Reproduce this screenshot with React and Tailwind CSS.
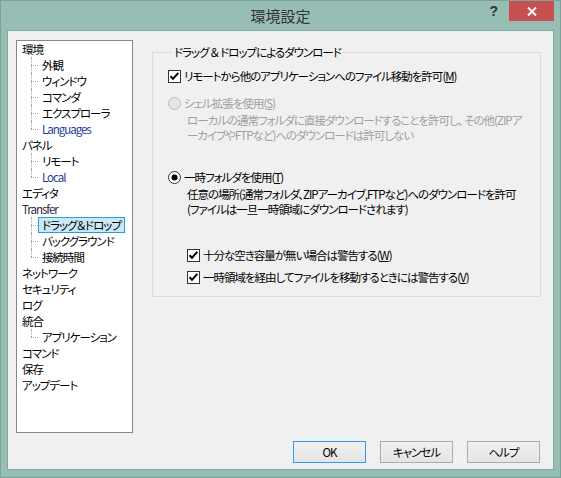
import React from "react";

const TREE = [
  { text: "環境" },
  { text: "外観", child: true },
  { text: "ウィンドウ", child: true },
  { text: "コマンダ", child: true },
  { text: "エクスプローラ", child: true },
  { text: "Languages", child: true, last: true, color: "text-[#1e3c96]" },
  { text: "パネル" },
  { text: "リモート", child: true },
  { text: "Local", child: true, last: true, color: "text-[#1e3c96]" },
  { text: "エディタ" },
  { text: "Transfer", color: "text-[#2b2a3f]" },
  { text: "ドラッグ＆ドロップ", child: true, selected: true },
  { text: "バックグラウンド", child: true },
  { text: "接続時間", child: true, last: true },
  { text: "ネットワーク" },
  { text: "セキュリティ" },
  { text: "ログ" },
  { text: "統合" },
  { text: "アプリケーション", child: true, last: true },
  { text: "コマンド" },
  { text: "保存" },
  { text: "アップデート" },
];

function TreeRow({ item }) {
  const label = (
    <span
      className={
        "h-[16px] flex items-center px-[3px] border whitespace-nowrap leading-[14px] " +
        (item.selected ? "bg-[#cbe8f6] border-[#26a0da]" : "border-transparent") +
        " " +
        (item.color || "text-black")
      }
    >
      {item.text}
    </span>
  );
  if (!item.child) {
    return <div className="h-[16px] flex pl-[1px]">{label}</div>;
  }
  return (
    <div className="h-[16px] flex pl-[14px]">
      <div className="w-[7px] flex flex-col">
        <div className="h-[8px] border-l border-dotted border-[#a0a0a0]" />
        <div
          className={
            "h-[8px] border-t border-dotted border-[#a0a0a0] " +
            (item.last ? "" : "border-l")
          }
        />
      </div>
      {label}
    </div>
  );
}

function CheckBox() {
  return (
    <svg width="13" height="13" viewBox="0 0 13 13" className="shrink-0">
      <rect x="0.5" y="0.5" width="12" height="12" fill="#fff" stroke="#333" />
      <path d="M2.5 6.2 L5 8.8 L10.3 2.8" fill="none" stroke="#000" strokeWidth="2" />
    </svg>
  );
}

function Radio({ checked, disabled }) {
  return (
    <svg width="13" height="13" viewBox="0 0 13 13" className="shrink-0">
      <circle
        cx="6.5"
        cy="6.5"
        r="6"
        fill={disabled ? "#e6e6e6" : "#fff"}
        stroke={disabled ? "#bcbcbc" : "#333"}
      />
      {checked && <circle cx="6.5" cy="6.5" r="3" fill="#000" />}
    </svg>
  );
}

function Key({ children }) {
  return (
    <>
      (<span className="underline underline-offset-1">{children}</span>)
    </>
  );
}

function Button({ children, focused }) {
  return (
    <button
      className={
        "w-[73px] h-[22px] border bg-gradient-to-b from-[#f0f0f0] to-[#e5e5e5] text-black leading-[14px] " +
        (focused ? "border-[#3399ff]" : "border-[#acacac]")
      }
    >
      {children}
    </button>
  );
}

export default function App() {
  return (
    <div className="w-[561px] h-[478px] bg-[#98bdb5] border border-[#7aa39a] flex flex-col font-['Noto_Sans_CJK_JP',sans-serif] [font-feature-settings:'palt'] text-[11.5px] tracking-[-1px] text-black select-none">
      {/* title bar */}
      <div className="h-[29px] flex items-start shrink-0">
        <div className="w-[80px]" />
        <div className="flex-1 text-center pt-[5px] text-[15px] leading-[20px] tracking-normal text-[#333]">環境設定</div>
        <div className="w-[80px] flex items-start justify-end pr-[6px]">
          <span className="mt-[2px] mr-[11px] font-['Liberation_Sans',sans-serif] font-bold text-[14px] leading-[16px] tracking-normal text-[#333]">
            ?
          </span>
          <div className="w-[45px] h-[20px] bg-[#c75050] flex items-center justify-center">
            <svg width="10" height="9" viewBox="0 0 10 9">
              <path d="M1 0.5 L9 8.5 M9 0.5 L1 8.5" stroke="#fff" strokeWidth="2" />
            </svg>
          </div>
        </div>
      </div>

      {/* client area */}
      <div className="ml-[6px] w-[547px] h-[440px] border border-[#82a9a0] bg-[#f0f0f0] flex flex-col">
        <div className="flex pl-[8px] pt-[9px]">
          <div className="w-[117px] h-[393px] border border-[#828790] bg-white flex flex-col shrink-0">
            {TREE.map((item) => (
              <TreeRow key={item.text} item={item} />
            ))}
          </div>

          <fieldset className="ml-[19px] mt-[4px] w-[389px] h-[253px] border border-[#dcdcdc] pl-[15px] flex flex-col">
            <legend className="ml-[4px] px-[2px] leading-[16px]">ドラッグ ＆ ドロップによるダウンロード</legend>

            <div className="mt-[8px] h-[16px] flex items-center gap-[3px]">
              <CheckBox />
              <span className="leading-[14px] whitespace-nowrap">
                リモートから他のアプリケーションへのファイル移動を許可<Key>M</Key>
              </span>
            </div>

            <div className="mt-[11px] h-[16px] flex items-center gap-[3px] text-[#a0a0a0]">
              <Radio disabled />
              <span className="leading-[14px] whitespace-nowrap">
                シェル拡張を使用<Key>S</Key>
              </span>
            </div>
            <div className="mt-[2px] pl-[19px] leading-[15px] whitespace-nowrap text-[#a0a0a0] flex flex-col">
              <span>ローカルの通常フォルダに直接ダウンロードすることを許可し、 その他(ZIPア</span>
              <span>ーカイブやFTPなど)へのダウンロードは許可しない</span>
            </div>

            <div className="mt-[26px] h-[16px] flex items-center gap-[3px]">
              <Radio checked />
              <span className="leading-[14px] whitespace-nowrap">
                一時フォルダを使用<Key>T</Key>
              </span>
            </div>
            <div className="mt-[2px] pl-[19px] leading-[15px] whitespace-nowrap flex flex-col">
              <span>任意の場所(通常フォルダ、ZIPアーカイブ,FTPなど)へのダウンロードを許可</span>
              <span>(ファイルは一旦一時領域にダウンロードされます)</span>
            </div>

            <div className="mt-[30px] pl-[19px] h-[16px] flex items-center gap-[3px]">
              <CheckBox />
              <span className="leading-[14px] whitespace-nowrap">
                十分な空き容量が無い場合は警告する<Key>W</Key>
              </span>
            </div>
            <div className="mt-[6px] pl-[19px] h-[16px] flex items-center gap-[3px]">
              <CheckBox />
              <span className="leading-[14px] whitespace-nowrap">
                一時領域を経由してファイルを移動するときには警告する<Key>V</Key>
              </span>
            </div>
          </fieldset>
        </div>

        <div className="mt-[8px] flex justify-end gap-[14px] pr-[13px]">
          <Button focused>OK</Button>
          <Button>キャンセル</Button>
          <Button>ヘルプ</Button>
        </div>
      </div>
    </div>
  );
}
